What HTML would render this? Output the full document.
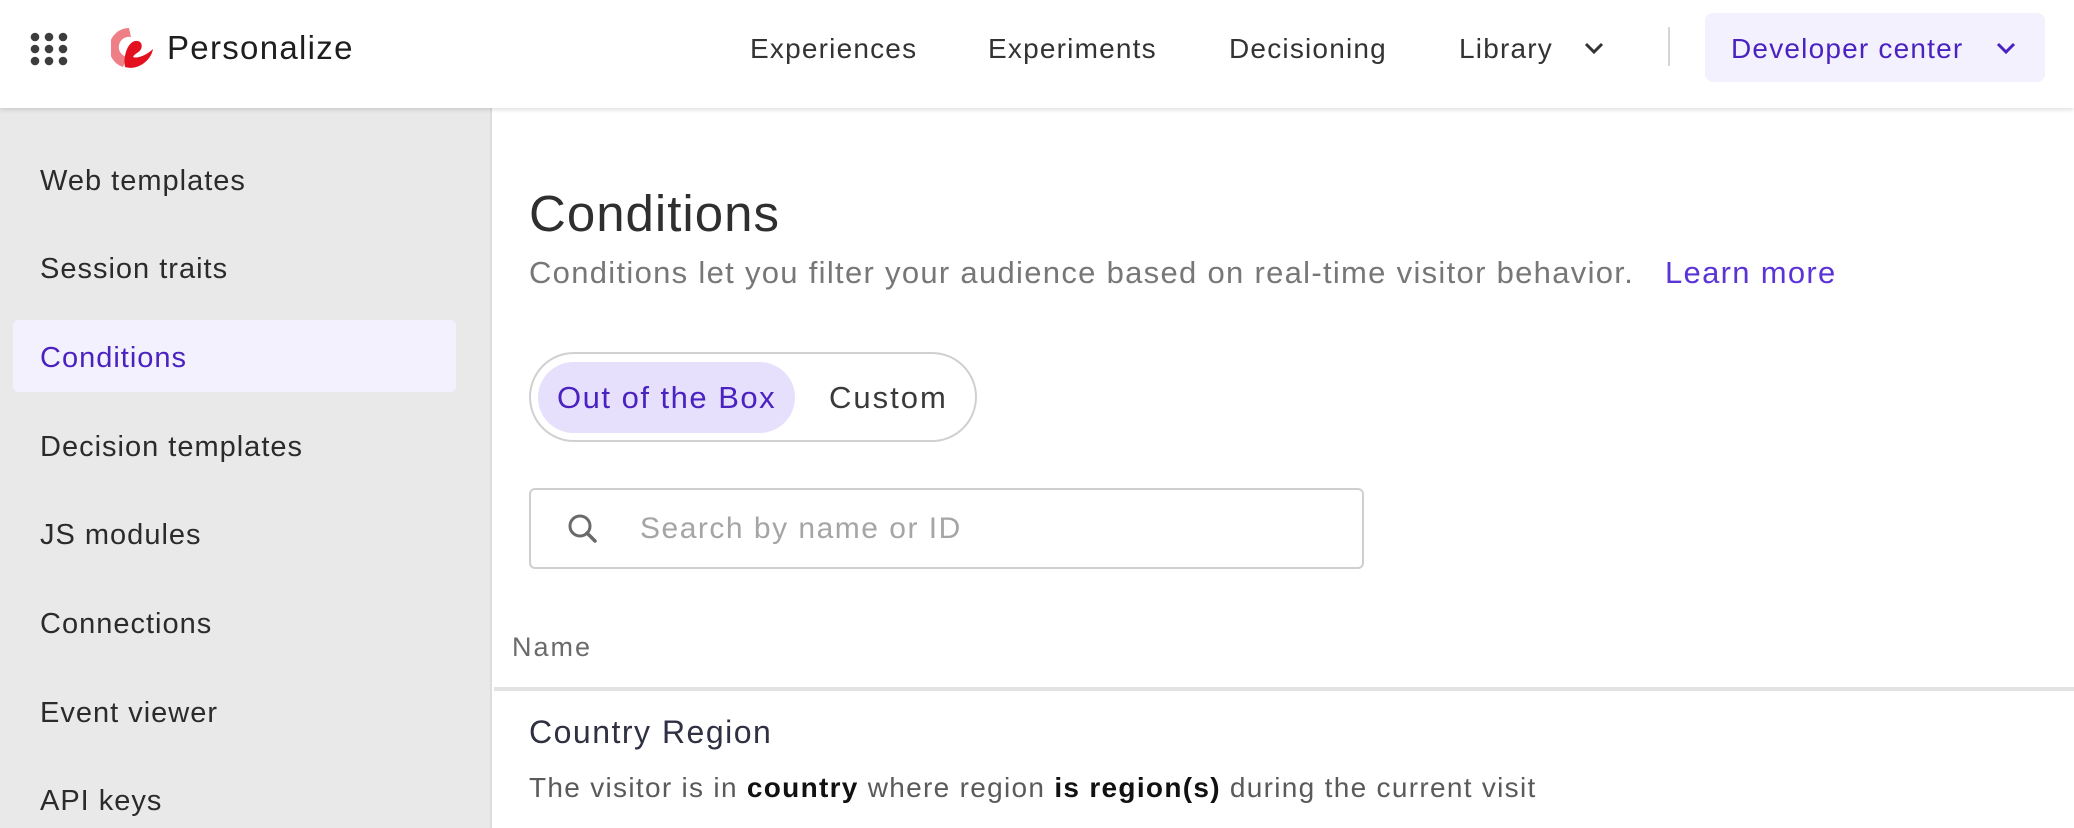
<!DOCTYPE html>
<html><head><meta charset="utf-8"><style>
*{box-sizing:border-box;margin:0;padding:0}
body{width:2074px;height:828px;overflow:hidden;background:#fff;font-family:"Liberation Sans",sans-serif;position:relative}
.hdr{position:absolute;left:0;top:0;width:2074px;height:108px;background:#fff;box-shadow:0 2px 4px rgba(0,0,0,.12);z-index:2}
.abs{position:absolute;white-space:nowrap}
.nav{font-size:28px;color:#333;top:33px;letter-spacing:1.2px}
.side{position:absolute;left:0;top:108px;width:492px;height:720px;background:#e9e9e9;border-right:2px solid #ddd}
.si{position:absolute;left:40px;font-size:29px;color:#2b2b2b;line-height:36px;letter-spacing:1px}
</style></head><body>
<div class="hdr">
 <svg class="abs" style="left:30px;top:32px" width="38" height="34" viewBox="0 0 38 34">
  <g fill="#3d3d3d"><circle cx="5" cy="5" r="4.3"/><circle cx="19" cy="5" r="4.3"/><circle cx="33" cy="5" r="4.3"/><circle cx="5" cy="17" r="4.3"/><circle cx="19" cy="17" r="4.3"/><circle cx="33" cy="17" r="4.3"/><circle cx="5" cy="29" r="4.3"/><circle cx="19" cy="29" r="4.3"/><circle cx="33" cy="29" r="4.3"/></g></svg>
 <svg class="abs" style="left:111px;top:27px" width="44" height="42" viewBox="0 0 44 42">
  <path d="M18 1 A20 20 0 0 0 12 40 L16 30 A10 10 0 0 1 20 10 Z" fill="#ef7f86"/>
  <path d="M14 40 C12 30 16 16 24 14 C30 13 32 18 30 22 C28 26 24 26 22 30 C26 32 36 28 42 22 C40 34 26 44 14 40Z" fill="#e3111f"/>
 </svg>
 <div class="abs" style="left:167px;top:29px;font-size:33px;font-weight:500;color:#1e1e1e;letter-spacing:1.3px">Personalize</div>
 <div class="abs nav" style="left:750px">Experiences</div>
 <div class="abs nav" style="left:988px">Experiments</div>
 <div class="abs nav" style="left:1229px">Decisioning</div>
 <div class="abs nav" style="left:1459px">Library</div>
 <svg class="abs" style="left:1583px;top:41px" width="22" height="14" viewBox="0 0 22 14"><path d="M3 3 L11 11 L19 3" stroke="#333" stroke-width="3" fill="none"/></svg>
 <div class="abs" style="left:1668px;top:27px;width:2px;height:39px;background:#d6d6d6"></div>
 <div class="abs" style="left:1705px;top:13px;width:340px;height:69px;background:#f4f1fe;border-radius:8px"></div>
 <div class="abs nav" style="left:1731px;color:#4a22c0">Developer center</div>
 <svg class="abs" style="left:1995px;top:41px" width="22" height="14" viewBox="0 0 22 14"><path d="M3 3 L11 11 L19 3" stroke="#4a22c0" stroke-width="3" fill="none"/></svg>
</div>
<div class="side">
 <div class="abs" style="left:13px;top:212px;width:443px;height:72px;background:#f3f1fd;border-radius:6px"></div>
 <div class="si" style="top:55px">Web templates</div>
 <div class="si" style="top:143px">Session traits</div>
 <div class="si" style="top:232px;color:#4a22c0">Conditions</div>
 <div class="si" style="top:321px">Decision templates</div>
 <div class="si" style="top:409px">JS modules</div>
 <div class="si" style="top:498px">Connections</div>
 <div class="si" style="top:587px">Event viewer</div>
 <div class="si" style="top:675px">API keys</div>
</div>
<div class="abs" style="left:529px;top:184px;font-size:51px;color:#2f2f2f;letter-spacing:1px">Conditions</div>
<div class="abs" style="left:529px;top:255px;font-size:31px;color:#777;letter-spacing:1.3px">Conditions let you filter your audience based on real-time visitor behavior.</div>
<div class="abs" style="left:1665px;top:255px;font-size:31px;color:#5b34d6;letter-spacing:1.3px">Learn more</div>
<div class="abs" style="left:529px;top:352px;width:448px;height:90px;border:2px solid #d0d0d0;border-radius:45px"></div>
<div class="abs" style="left:538px;top:362px;width:257px;height:71px;background:#e6e0fd;border-radius:36px"></div>
<div class="abs" style="left:557px;top:380px;font-size:31px;font-weight:500;color:#4a22c0;letter-spacing:1.5px">Out of the Box</div>
<div class="abs" style="left:829px;top:380px;font-size:31px;font-weight:500;color:#3a3a3a;letter-spacing:2px">Custom</div>
<div class="abs" style="left:529px;top:488px;width:835px;height:81px;border:2px solid #cfcfcf;border-radius:6px"></div>
<svg class="abs" style="left:566px;top:512px" width="34" height="34" viewBox="0 0 34 34"><circle cx="14" cy="14" r="10" stroke="#6a6a6a" stroke-width="3" fill="none"/><path d="M21 21 L29 29" stroke="#6a6a6a" stroke-width="3.5" stroke-linecap="round"/></svg>
<div class="abs" style="left:640px;top:512px;font-size:30px;color:#a5a5a5;letter-spacing:1.5px">Search by name or ID</div>
<div class="abs" style="left:512px;top:632px;font-size:27px;color:#6b6b6b;letter-spacing:2px">Name</div>
<div class="abs" style="left:494px;top:687px;width:1580px;height:4px;background:#e2e2e2"></div>
<div class="abs" style="left:529px;top:714px;font-size:32px;color:#2f3142;letter-spacing:1.5px">Country Region</div>
<div class="abs" style="left:529px;top:772px;font-size:28px;color:#5a5a5a;letter-spacing:1.3px">The visitor is in <b style="color:#111">country</b> where region <b style="color:#111">is region(s)</b> during the current visit</div>
</body></html>
